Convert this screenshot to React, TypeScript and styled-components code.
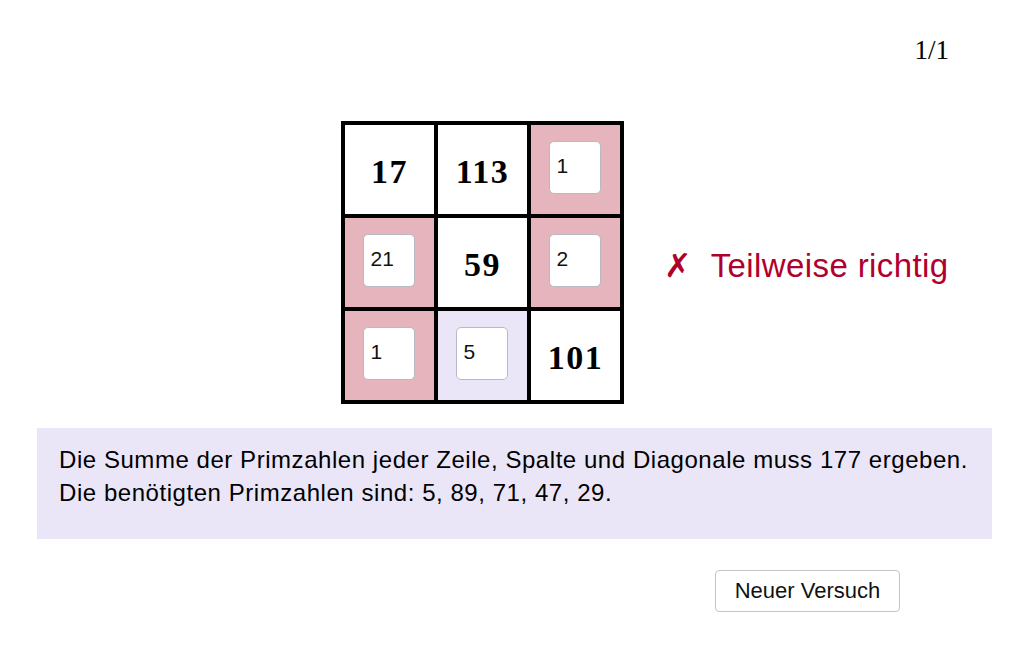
import React from "react";
import styled, { createGlobalStyle } from "styled-components";

const Global = createGlobalStyle`
  html, body { margin: 0; padding: 0; background: #ffffff; }
  body { font-family: "Liberation Sans", Arial, sans-serif; color: #000; }
`;

const Page = styled.div`
  width: 1032px;
  height: 645px;
  box-sizing: border-box;
  padding: 0 40px 0 37px;
  display: flex;
  flex-direction: column;
`;

const TopBar = styled.div`
  display: flex;
  justify-content: flex-end;
  padding: 35px 43px 0 0;
  height: 86px;
  box-sizing: border-box;
`;

const Counter = styled.div`
  font-family: "Liberation Serif", "Times New Roman", serif;
  font-size: 27px;
  line-height: 30px;
`;

const PuzzleRow = styled.div`
  display: flex;
  align-items: center;
  gap: 40px;
  padding-left: 304px;
  margin-top: 35px;
`;

const Board = styled.div`
  display: grid;
  grid-template-columns: repeat(3, 89px);
  grid-template-rows: repeat(3, 89px);
  gap: 4px;
  padding: 4px;
  background: #000;
  width: max-content;
`;

const Cell = styled.div<{ $tone: "plain" | "wrong" | "open" }>`
  background: ${(p) =>
    p.$tone === "wrong" ? "#e6b4bc" : p.$tone === "open" ? "#eae6f8" : "#ffffff"};
  display: flex;
  align-items: center;
  justify-content: center;
`;

const Given = styled.span`
  font-family: "Liberation Serif", "Times New Roman", serif;
  font-weight: 700;
  font-size: 34px;
  letter-spacing: 1.5px;
  padding-top: 4px;
`;

const Entry = styled.input`
  width: 52px;
  height: 53px;
  box-sizing: border-box;
  border: 1px solid #b9b9c3;
  border-radius: 5px;
  background: #fff;
  padding: 0 0 2px 7px;
  margin: 0 2px 5px 0;
  font-family: "Liberation Sans", Arial, sans-serif;
  font-size: 21px;
  color: #111;
  outline: none;
`;

const Status = styled.div`
  color: #b0002d;
  font-size: 33px;
  letter-spacing: 0.4px;
  display: flex;
  align-items: center;
  gap: 19px;
  padding-top: 6px;
`;

const Cross = styled.span`
  font-family: "DejaVu Sans", sans-serif;
  font-weight: 700;
  font-size: 33px;
  letter-spacing: 0;
`;

const Hint = styled.div`
  margin-top: 24px;
  background: #eae6f8;
  padding: 15px 0 30px 22px;
  font-size: 24px;
  letter-spacing: 0.55px;
  line-height: 33px;
  white-space: nowrap;
`;

const Actions = styled.div`
  display: flex;
  justify-content: flex-end;
  padding-right: 92px;
  margin-top: 31px;
`;

const Button = styled.button`
  height: 42px;
  width: 185px;
  background: #fff;
  border: 1px solid #c4c4c8;
  border-radius: 4px;
  font-family: "Liberation Sans", Arial, sans-serif;
  font-size: 22px;
  color: #111;
  padding: 0;
`;

type CellDef =
  | { kind: "given"; value: string }
  | { kind: "entry"; value: string; tone: "wrong" | "open" };

const cells: CellDef[] = [
  { kind: "given", value: "17" },
  { kind: "given", value: "113" },
  { kind: "entry", value: "1", tone: "wrong" },
  { kind: "entry", value: "21", tone: "wrong" },
  { kind: "given", value: "59" },
  { kind: "entry", value: "2", tone: "wrong" },
  { kind: "entry", value: "1", tone: "wrong" },
  { kind: "entry", value: "5", tone: "open" },
  { kind: "given", value: "101" },
];

export default function App() {
  return (
    <>
      <Global />
      <Page>
        <TopBar>
          <Counter>1/1</Counter>
        </TopBar>
        <PuzzleRow>
          <Board>
            {cells.map((c, i) =>
              c.kind === "given" ? (
                <Cell key={i} $tone="plain">
                  <Given>{c.value}</Given>
                </Cell>
              ) : (
                <Cell key={i} $tone={c.tone}>
                  <Entry defaultValue={c.value} />
                </Cell>
              )
            )}
          </Board>
          <Status>
            <Cross>✗</Cross>
            <span>Teilweise richtig</span>
          </Status>
        </PuzzleRow>
        <Hint>
          Die Summe der Primzahlen jeder Zeile, Spalte und Diagonale muss 177 ergeben.
          <br />
          Die benötigten Primzahlen sind: 5, 89, 71, 47, 29.
        </Hint>
        <Actions>
          <Button>Neuer Versuch</Button>
        </Actions>
      </Page>
    </>
  );
}
